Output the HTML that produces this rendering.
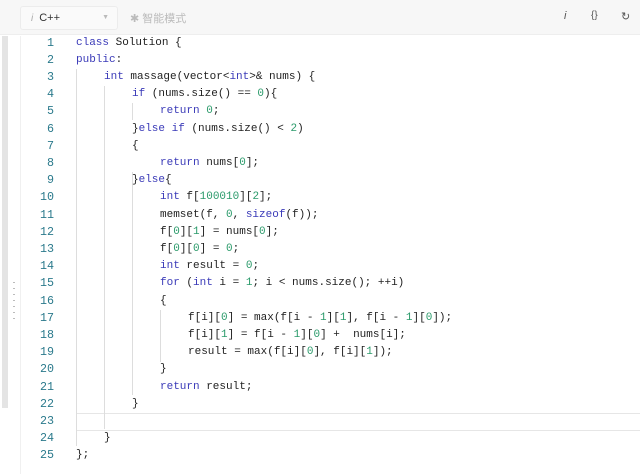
<!DOCTYPE html>
<html><head><style>
body{margin:0;width:640px;height:474px;overflow:hidden;background:#fff;font-family:"Liberation Sans","Noto Sans CJK SC",sans-serif;position:relative}
.hdr{position:absolute;left:0;top:0;width:640px;height:34px;background:#f7f7f7;border-bottom:1px solid #eee}
.sel{position:absolute;left:20px;top:6px;width:96px;height:22px;background:#fafafa;border:1px solid #ececec;border-radius:3px;font-size:11px;color:#333;line-height:22px}
.sel i{color:#aaa;margin-left:10px;margin-right:6px;font-size:10px}
.sel .car{position:absolute;right:8px;top:0;color:#bbb;font-size:7px}
.mode{position:absolute;left:130px;top:10px;font-size:11px;color:#bbb}
.ic{position:absolute;top:10px;font-size:11px;color:#555}
.sb{position:absolute;left:2px;top:36px;width:6px;height:372px;background:#e4e4e4}
.gb{position:absolute;left:20px;top:36px;width:1px;height:438px;background:#f0f0f0}
.ln{position:absolute;left:20px;width:34px;text-align:right;font:11.7px/17.2px "Liberation Mono",monospace;color:#2b7a8c}
.cd{position:absolute;white-space:pre;font:11px/17.2px "Liberation Mono",monospace;color:#222}
.k{color:#3a3ab8}.n{color:#2a9a6a}
.g{position:absolute;width:1px;background:#ddd}
.cur{position:absolute;left:76px;width:564px;top:413px;height:16px;border-top:1px solid #e6e6e6;border-bottom:1px solid #e6e6e6}
.dots{position:absolute;left:13px;top:282px;width:2px;height:40px;background:repeating-linear-gradient(#bbb 0 1px,transparent 1px 6px)}
</style></head><body>
<div class="hdr">
<div class="sel"><i>i</i>C++<span class="car">▼</span></div>
<div class="mode">✱ 智能模式</div>
<div class="ic" style="left:564px;font-style:italic">i</div>
<div class="ic" style="left:591px;font-size:10px">{}</div>
<div class="ic" style="left:621px">↻</div>
</div>
<div class="sb"></div><div class="gb"></div><div class="dots"></div>
<div class="cur"></div>
<div class="g" style="left:76px;top:69px;height:377px"></div>
<div class="g" style="left:104px;top:86px;height:343px"></div>
<div class="g" style="left:132px;top:103px;height:17px"></div>
<div class="g" style="left:132px;top:172px;height:17px"></div>
<div class="g" style="left:132px;top:189px;height:206px"></div>
<div class="g" style="left:160px;top:310px;height:52px"></div>
<div id="c"></div>
<script>
var L=[
'<span class="k">class</span> Solution {',
'<span class="k">public</span>:',
'    <span class="k">int</span> massage(vector&lt;<span class="k">int</span>&gt;&amp; nums) {',
'        <span class="k">if</span> (nums.size() == <span class="n">0</span>){',
'            <span class="k">return</span> <span class="n">0</span>;',
'        }<span class="k">else</span> <span class="k">if</span> (nums.size() &lt; <span class="n">2</span>)',
'        {',
'            <span class="k">return</span> nums[<span class="n">0</span>];',
'        }<span class="k">else</span>{',
'            <span class="k">int</span> f[<span class="n">100010</span>][<span class="n">2</span>];',
'            memset(f, <span class="n">0</span>, <span class="k">sizeof</span>(f));',
'            f[<span class="n">0</span>][<span class="n">1</span>] = nums[<span class="n">0</span>];',
'            f[<span class="n">0</span>][<span class="n">0</span>] = <span class="n">0</span>;',
'            <span class="k">int</span> result = <span class="n">0</span>;',
'            <span class="k">for</span> (<span class="k">int</span> i = <span class="n">1</span>; i &lt; nums.size(); ++i)',
'            {',
'                f[i][<span class="n">0</span>] = max(f[i - <span class="n">1</span>][<span class="n">1</span>], f[i - <span class="n">1</span>][<span class="n">0</span>]);',
'                f[i][<span class="n">1</span>] = f[i - <span class="n">1</span>][<span class="n">0</span>] +  nums[i];',
'                result = max(f[i][<span class="n">0</span>], f[i][<span class="n">1</span>]);',
'            }',
'            <span class="k">return</span> result;',
'        }',
'',
'    }',
'};'];
var h='';
for(var i=0;i<L.length;i++){var t=34.5+i*17.2;var s=L[i];var m=s.match(/^ */)[0].length;
h+='<div class="ln" style="top:'+t+'px">'+(i+1)+'</div><div class="cd" style="left:'+(76+m*7)+'px;top:'+t+'px">'+s.slice(m)+'</div>';}
document.getElementById('c').innerHTML=h;
</script>
</body></html>
